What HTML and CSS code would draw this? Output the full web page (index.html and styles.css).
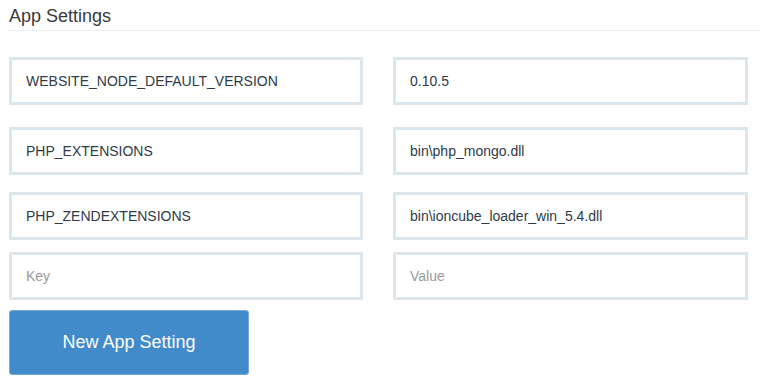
FILE: index.html
```html
<!DOCTYPE html>
<html lang="en">
<head>
    <meta charset="UTF-8">
    <title>App Settings</title>
    <link rel="stylesheet" href="styles.css">
</head>
<body>
    <div class="settings">
        <h2 class="settings-title">App Settings</h2>

        <form class="settings-form">
            <div class="setting-row row-first">
                <input class="field" type="text" value="WEBSITE_NODE_DEFAULT_VERSION">
                <input class="field" type="text" value="0.10.5">
            </div>
            <div class="setting-row row-second">
                <input class="field" type="text" value="PHP_EXTENSIONS">
                <input class="field" type="text" value="bin\php_mongo.dll">
            </div>
            <div class="setting-row row-third">
                <input class="field" type="text" value="PHP_ZENDEXTENSIONS">
                <input class="field" type="text" value="bin\ioncube_loader_win_5.4.dll">
            </div>
            <div class="setting-row row-new">
                <input class="field" type="text" placeholder="Key">
                <input class="field" type="text" placeholder="Value">
            </div>

            <button class="btn-new" type="button">New App Setting</button>
        </form>
    </div>
</body>
</html>
```

FILE: styles.css
```css
/* Resetting some defaults */
* {
    margin: 0;
    padding: 0;
    box-sizing: border-box;
}

body {
    font-family: "Liberation Sans", Arial, sans-serif;
    background: #fff;
    color: #333;
}

.settings {
    padding-left: 9px;
}

/* Heading with divider */
.settings-title {
    margin-top: 5px;
    padding-bottom: 3px;
    font-size: 18px;
    line-height: 22px;
    font-weight: normal;
    color: #3a3a3a;
    border-bottom: 1px solid #ebedef;
}

.settings-form {
    width: 739px;
}

.setting-row {
    display: grid;
    grid-template-columns: 354px 355px;
    column-gap: 30px;
}

.row-first  { margin-top: 26px; }
.row-second { margin-top: 22px; }
.row-third  { margin-top: 17px; }
.row-new    { margin-top: 12px; }

.field {
    display: block;
    width: 100%;
    height: 48px;
    padding: 0 14px;
    border: 3px solid #dde5ed;
    font-family: "Liberation Sans", Arial, sans-serif;
    font-size: 14px;
    color: #2f3b48;
    background: #fff;
    outline: none;
}

.field::placeholder {
    color: #9a9a9a;
}

/* Add button */
.btn-new {
    display: block;
    width: 240px;
    height: 65px;
    margin-top: 10px;
    background-color: #428bca;
    border: 1px solid #78a8de;
    border-radius: 3px;
    color: #fff;
    font-family: "Liberation Sans", Arial, sans-serif;
    font-size: 18px;
    cursor: pointer;
}
```
